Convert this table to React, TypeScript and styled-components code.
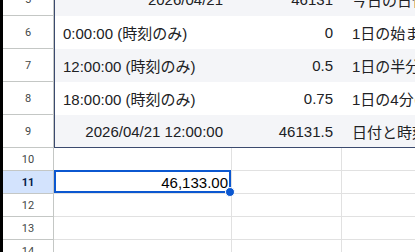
import React from 'react';
import styled, { createGlobalStyle } from 'styled-components';

const GlobalStyle = createGlobalStyle`
    html, body {
        margin: 0;
        padding: 0;
        background: #ffffff;
        overflow: hidden;
    }
    body {
        font-family: "Liberation Sans", "Noto Sans CJK JP", sans-serif;
    }
`;

const Sheet = styled.div`
    display: flex;
    width: 415px;
    height: 252px;
    overflow: hidden;
`;

const Edge = styled.div`
    width: 3px;
    flex-shrink: 0;
    background: #000000;
`;

const Grid = styled.div`
    flex: 1;
    display: flex;
    flex-direction: column;
    margin-top: -17px;
`;

const Row = styled.div<{ $h: number }>`
    display: grid;
    grid-template-columns: 51px 178px 110px 1fr;
    height: ${({ $h }) => $h}px;
    flex-shrink: 0;
`;

const RowHead = styled.div<{ $active?: boolean }>`
    display: flex;
    align-items: center;
    justify-content: center;
    border-right: 1px solid #c4c7c5;
    border-bottom: 1px solid #c4c7c5;
    background: ${({ $active }) => ($active ? '#d3e3fd' : '#ffffff')};
    color: ${({ $active }) => ($active ? '#041e49' : '#444746')};
    font-family: Roboto, "Liberation Sans", sans-serif;
    font-size: 11px;
    font-weight: ${({ $active }) => ($active ? 700 : 400)};
`;

const TableCell = styled.div<{ $stripe: boolean; $right?: boolean; $first?: boolean; $last?: boolean }>`
    display: flex;
    align-items: center;
    justify-content: ${({ $right }) => ($right ? 'flex-end' : 'flex-start')};
    padding: 0 9px 0 ${({ $first }) => ($first ? 8 : 10)}px;
    background: ${({ $stripe }) => ($stripe ? '#f4f5f8' : '#ffffff')};
    border-left: ${({ $first }) => ($first ? '1px solid #3b4a6e' : 'none')};
    border-bottom: ${({ $last }) => ($last ? '1px solid #3b4a6e' : 'none')};
    color: #202124;
    font-size: 15px;
    white-space: nowrap;
    overflow: hidden;
`;

const Cell = styled.div<{ $edge?: boolean }>`
    position: relative;
    display: flex;
    align-items: center;
    justify-content: flex-end;
    padding: 0 3px;
    border-right: ${({ $edge }) => ($edge ? 'none' : '1px solid #e1e1e1')};
    border-bottom: 1px solid #e1e1e1;
    color: #000000;
    font-size: 15px;
    white-space: nowrap;
`;

const SelectedCell = styled(Cell)`
    z-index: 2;
    &::after {
        content: '';
        position: absolute;
        top: -1px;
        left: 0;
        right: 0;
        bottom: 0;
        border: 2px solid #0b57d0;
        pointer-events: none;
    }
`;

const FillHandle = styled.span`
    position: absolute;
    right: -4px;
    bottom: -4px;
    width: 8px;
    height: 8px;
    border-radius: 50%;
    background: #0b57d0;
    border: 1px solid #ffffff;
    z-index: 3;
`;

const tableRows = [
    { n: 5, a: '2026/04/21', aRight: true, b: '46131', c: '今日の日付（TODAY関数）' },
    { n: 6, a: '0:00:00 (時刻のみ)', aRight: false, b: '0', c: '1日の始まり（午前0時）' },
    { n: 7, a: '12:00:00 (時刻のみ)', aRight: false, b: '0.5', c: '1日の半分（正午）' },
    { n: 8, a: '18:00:00 (時刻のみ)', aRight: false, b: '0.75', c: '1日の4分の3（午後6時）' },
    { n: 9, a: '2026/04/21 12:00:00', aRight: true, b: '46131.5', c: '日付と時刻の組み合わせ' },
];

const emptyRows = [10, 11, 12, 13, 14];

const App: React.FC = () => {
    return (
        <>
            <GlobalStyle />
            <Sheet>
                <Edge />
                <Grid>
                    {tableRows.map((r, i) => (
                        <Row key={r.n} $h={33}>
                            <RowHead>{r.n}</RowHead>
                            <TableCell $stripe={i % 2 === 0} $right={r.aRight} $first $last={r.n === 9}>
                                {r.a}
                            </TableCell>
                            <TableCell $stripe={i % 2 === 0} $right $last={r.n === 9}>
                                {r.b}
                            </TableCell>
                            <TableCell $stripe={i % 2 === 0} $last={r.n === 9}>
                                {r.c}
                            </TableCell>
                        </Row>
                    ))}
                    {emptyRows.map((n) => (
                        <Row key={n} $h={23}>
                            <RowHead $active={n === 11}>{n}</RowHead>
                            {n === 11 ? (
                                <SelectedCell>
                                    46,133.00
                                    <FillHandle />
                                </SelectedCell>
                            ) : (
                                <Cell />
                            )}
                            <Cell />
                            <Cell $edge />
                        </Row>
                    ))}
                </Grid>
            </Sheet>
        </>
    );
};

export default App;
